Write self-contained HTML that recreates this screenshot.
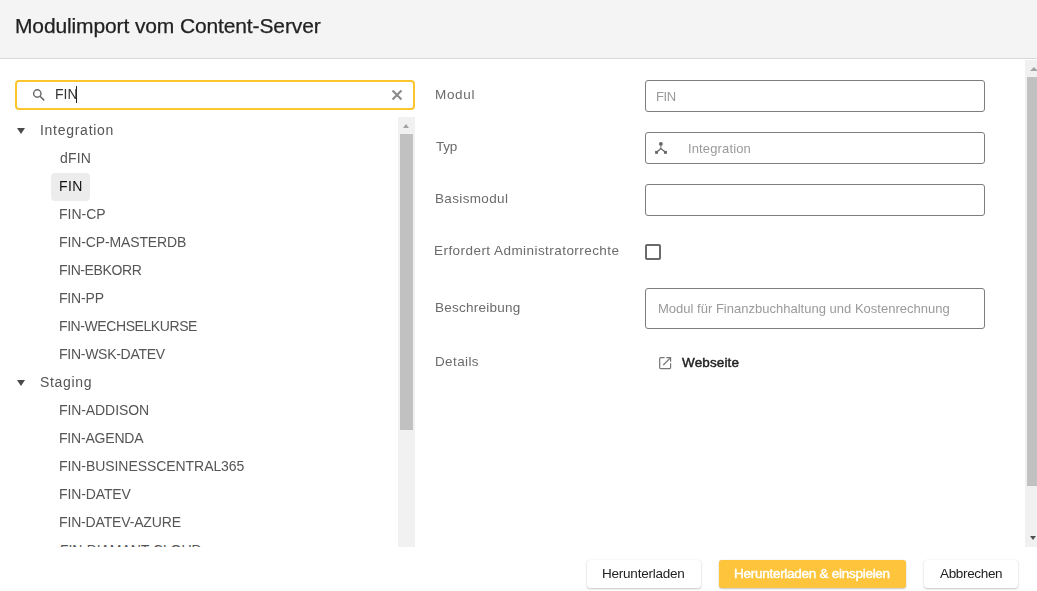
<!DOCTYPE html>
<html><head><meta charset="utf-8">
<style>
*{box-sizing:border-box;margin:0;padding:0}
html,body{-webkit-font-smoothing:antialiased;width:1037px;height:591px;overflow:hidden;background:#fff;font-family:"Liberation Sans",sans-serif;position:relative}
.a{position:absolute;white-space:nowrap}
.t{line-height:20px;will-change:transform}
.inp{left:645px;width:340px;height:32px;border:1px solid #7d7d7d;border-radius:3px}
.btn{top:560px;height:28px;border-radius:3px;background:#fff;box-shadow:0 1px 2px rgba(0,0,0,.22),0 0 1px rgba(0,0,0,.12)}
.tri{width:0;height:0;border-left:4px solid transparent;border-right:4px solid transparent;border-top:6px solid #4a4a4a}
</style></head><body>
<div class="a" style="left:0;top:0;width:1037px;height:58px;background:#f4f4f4"></div>
<div class="a" style="left:0;top:58px;width:1037px;height:1px;background:#d8d8d8"></div>

<div class="a" style="left:15px;top:80px;width:400px;height:30px;border:2px solid #fdc52f;border-radius:4px"></div>
<svg class="a" style="left:31px;top:87px" width="16" height="16" viewBox="0 0 16 16"><circle cx="6.3" cy="6.5" r="3.7" fill="none" stroke="#666" stroke-width="1.4"/><path d="M9 9.2 L13.2 13.4" stroke="#666" stroke-width="1.5"/></svg>
<div class="a" style="left:76px;top:86px;width:1px;height:17px;background:#222"></div>
<svg class="a" style="left:390px;top:88px" width="14" height="14" viewBox="0 0 14 14"><path d="M3.3 3.3L10.7 10.7M10.7 3.3L3.3 10.7" stroke="#8a8a8a" stroke-width="2.1" stroke-linecap="square"/></svg>

<!-- tree -->
<div class="a tri" style="left:17px;top:128px"></div>
<div class="a" style="left:51px;top:173px;width:39px;height:28px;background:#ececec;border-radius:4px"></div>
<div class="a tri" style="left:17px;top:380px"></div>
<div class="a" style="left:0;top:536px;width:398px;height:11px;overflow:hidden"><div class="a" style="left:60px;top:4.4px;font-size:14px;line-height:20px;color:#555;letter-spacing:-0.1px">FIN-DIAMANT-CLOUD</div></div>

<!-- tree scrollbar -->
<div class="a" style="left:398px;top:117px;width:17px;height:430px;background:#f1f1f1"></div>
<div class="a" style="left:403px;top:124px;width:0;height:0;border-left:3.5px solid transparent;border-right:3.5px solid transparent;border-bottom:4px solid #a3a3a3"></div>
<div class="a" style="left:400px;top:134px;width:13px;height:296px;background:#c1c1c1"></div>

<!-- right form -->
<div class="a inp" style="top:80px"></div>
<div class="a inp" style="top:132px"></div>
<svg class="a" style="left:654px;top:141px" width="14" height="14" viewBox="0 0 14 14"><circle cx="6.85" cy="2.9" r="1.95" fill="#666"/><path d="M6.85 3V7.5" stroke="#777" stroke-width="1" fill="none"/><path d="M2.6 11.3L6.85 7.5L11.4 11.3" stroke="#666" stroke-width="1.3" fill="none"/><rect x="1.1" y="9.9" width="2.9" height="2.9" fill="#666"/><rect x="10" y="9.9" width="2.9" height="2.9" fill="#666"/></svg>
<div class="a inp" style="top:184px"></div>
<div class="a" style="left:645px;top:244px;width:16px;height:16px;border:2px solid #6a6a6a;border-radius:2px"></div>
<div class="a inp" style="top:288px;height:41px"></div>
<svg class="a" style="left:658px;top:356px" width="14" height="14" viewBox="0 0 14 14"><path d="M6.6 1.7H2.7Q1.7 1.7 1.7 2.7V11.6Q1.7 12.6 2.7 12.6H11.6Q12.6 12.6 12.6 11.6V7.3" stroke="#777" stroke-width="1.2" fill="none"/><path d="M8.3 1.7H12.6V5.8" stroke="#777" stroke-width="1.2" fill="none"/><path d="M12.4 1.9L5.3 9" stroke="#777" stroke-width="1.3" fill="none"/></svg>

<!-- right scrollbar -->
<div class="a" style="left:1025px;top:60px;width:17px;height:487px;background:#f1f1f1"></div>
<div class="a" style="left:1029.5px;top:67px;width:0;height:0;border-left:4px solid transparent;border-right:4px solid transparent;border-bottom:4px solid #a3a3a3"></div>
<div class="a" style="left:1027px;top:77px;width:13px;height:409px;background:#c1c1c1"></div>
<div class="a" style="left:1029.5px;top:536px;width:0;height:0;border-left:3.5px solid transparent;border-right:3.5px solid transparent;border-top:4px solid #505050"></div>

<!-- buttons -->
<div class="a btn" style="left:587px;width:114px"></div>
<div class="a btn" style="left:719px;width:187px;background:#fec53c"></div>
<div class="a btn" style="left:924px;width:94px"></div>
<div id="title" class="a t" style="left:15.00px;top:16.00px;font-size:21px;font-weight:normal;color:#222;letter-spacing:-0.124px;-webkit-text-stroke:0.25px #222;">Modulimport vom Content-Server</div>
<div id="sfin" class="a t" style="left:55.00px;top:84.00px;font-size:14px;font-weight:normal;color:#333;letter-spacing:0.000px;">FIN</div>
<div id="tInt" class="a t" style="left:40.00px;top:120.00px;font-size:14px;font-weight:normal;color:#555;letter-spacing:0.720px;">Integration</div>
<div id="dfin" class="a t" style="left:60.00px;top:148.00px;font-size:14px;font-weight:normal;color:#555;letter-spacing:0.150px;">dFIN</div>
<div id="fin" class="a t" style="left:59.00px;top:176.00px;font-size:14px;font-weight:normal;color:#111;letter-spacing:0.450px;">FIN</div>
<div id="fincp" class="a t" style="left:59.00px;top:204.00px;font-size:14px;font-weight:normal;color:#555;letter-spacing:0.000px;">FIN-CP</div>
<div id="finmdb" class="a t" style="left:59.00px;top:232.00px;font-size:14px;font-weight:normal;color:#555;letter-spacing:-0.128px;">FIN-CP-MASTERDB</div>
<div id="finebk" class="a t" style="left:59.00px;top:260.00px;font-size:14px;font-weight:normal;color:#555;letter-spacing:-0.400px;">FIN-EBKORR</div>
<div id="finpp" class="a t" style="left:59.00px;top:288.00px;font-size:14px;font-weight:normal;color:#555;letter-spacing:-0.180px;">FIN-PP</div>
<div id="finwk" class="a t" style="left:59.00px;top:316.00px;font-size:14px;font-weight:normal;color:#555;letter-spacing:-0.420px;">FIN-WECHSELKURSE</div>
<div id="finwsk" class="a t" style="left:59.00px;top:344.00px;font-size:14px;font-weight:normal;color:#555;letter-spacing:-0.268px;">FIN-WSK-DATEV</div>
<div id="tStg" class="a t" style="left:40.00px;top:372.00px;font-size:14px;font-weight:normal;color:#555;letter-spacing:0.675px;">Staging</div>
<div id="finadd" class="a t" style="left:59.00px;top:400.00px;font-size:14px;font-weight:normal;color:#555;letter-spacing:-0.090px;">FIN-ADDISON</div>
<div id="finag" class="a t" style="left:59.00px;top:428.00px;font-size:14px;font-weight:normal;color:#555;letter-spacing:-0.200px;">FIN-AGENDA</div>
<div id="finbc" class="a t" style="left:59.00px;top:456.00px;font-size:14px;font-weight:normal;color:#555;letter-spacing:-0.065px;">FIN-BUSINESSCENTRAL365</div>
<div id="findv" class="a t" style="left:59.00px;top:484.00px;font-size:14px;font-weight:normal;color:#555;letter-spacing:-0.116px;">FIN-DATEV</div>
<div id="findva" class="a t" style="left:59.00px;top:512.00px;font-size:14px;font-weight:normal;color:#555;letter-spacing:-0.158px;">FIN-DATEV-AZURE</div>
<div id="l1" class="a t" style="left:435.00px;top:85.00px;font-size:13.5px;font-weight:normal;color:#6b6b6b;letter-spacing:0.675px;">Modul</div>
<div id="l2" class="a t" style="left:436.00px;top:137.00px;font-size:13.5px;font-weight:normal;color:#6b6b6b;letter-spacing:-0.225px;">Typ</div>
<div id="l3" class="a t" style="left:435.00px;top:189.00px;font-size:13.5px;font-weight:normal;color:#6b6b6b;letter-spacing:0.350px;">Basismodul</div>
<div id="l4" class="a t" style="left:434.00px;top:241.00px;font-size:13.5px;font-weight:normal;color:#6b6b6b;letter-spacing:0.445px;">Erfordert Administratorrechte</div>
<div id="l5" class="a t" style="left:435.00px;top:298.00px;font-size:13.5px;font-weight:normal;color:#6b6b6b;letter-spacing:0.247px;">Beschreibung</div>
<div id="l6" class="a t" style="left:435.00px;top:352.00px;font-size:13.5px;font-weight:normal;color:#6b6b6b;letter-spacing:0.375px;">Details</div>
<div id="i1" class="a t" style="left:656.00px;top:87.00px;font-size:13px;font-weight:normal;color:#9a9a9a;letter-spacing:-0.450px;">FIN</div>
<div id="i2" class="a t" style="left:688.00px;top:139.00px;font-size:13px;font-weight:normal;color:#9a9a9a;letter-spacing:0.135px;">Integration</div>
<div id="i3" class="a t" style="left:658.00px;top:299.00px;font-size:13px;font-weight:normal;color:#9a9a9a;letter-spacing:0.010px;">Modul für Finanzbuchhaltung und Kostenrechnung</div>
<div id="web" class="a t" style="left:682.00px;top:353.00px;font-size:13.5px;font-weight:normal;color:#222;letter-spacing:0.127px;-webkit-text-stroke:0.45px #222;">Webseite</div>
<div id="b1" class="a t" style="left:602.00px;top:564.00px;font-size:13.5px;font-weight:normal;color:#222;letter-spacing:-0.225px;">Herunterladen</div>
<div id="b2" class="a t" style="left:734.00px;top:564.00px;font-size:13.5px;font-weight:normal;color:#fff;letter-spacing:-0.270px;-webkit-text-stroke:0.45px #fff;">Herunterladen &amp; einspielen</div>
<div id="b3" class="a t" style="left:940.00px;top:564.00px;font-size:13.5px;font-weight:normal;color:#222;letter-spacing:-0.334px;">Abbrechen</div>
</body></html>
